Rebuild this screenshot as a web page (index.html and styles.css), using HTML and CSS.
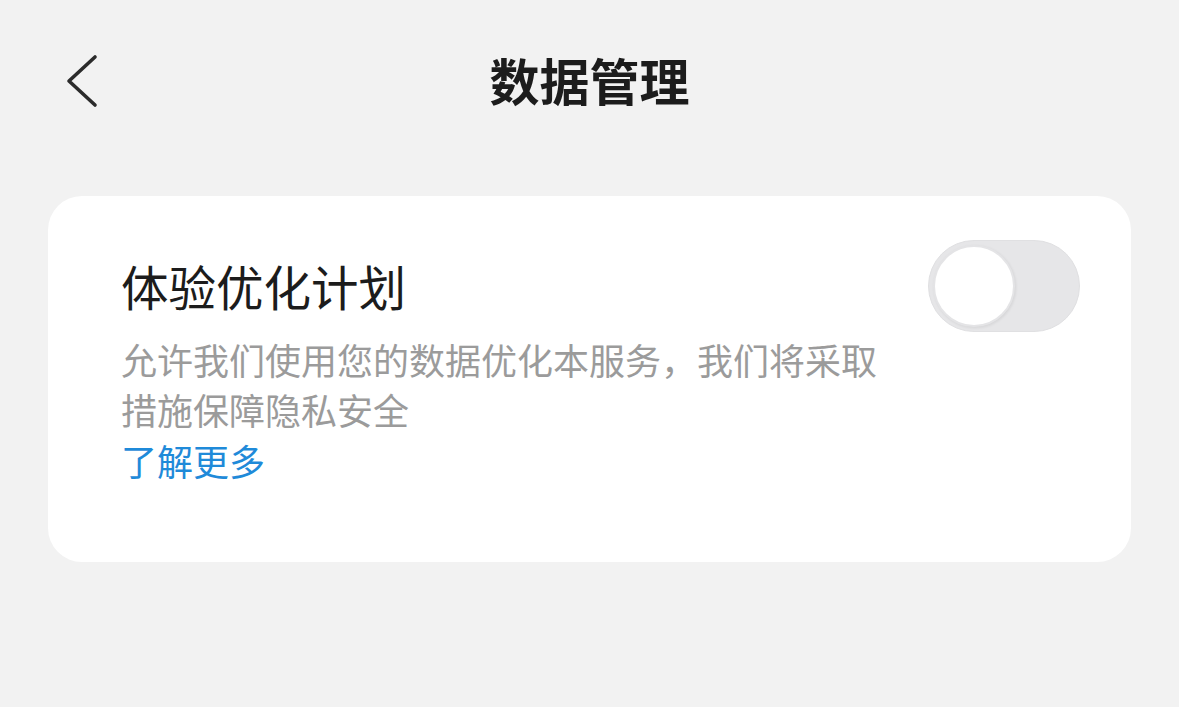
FILE: index.html
```html
<!DOCTYPE html>
<html lang="zh-CN">
<head>
    <meta charset="UTF-8">
    <meta name="viewport" content="width=device-width, initial-scale=1.0">
    <title>数据管理</title>
    <link rel="stylesheet" href="styles.css">
</head>
<body>
    <header class="topbar">
        <a class="back" href="#">
            <svg width="36" height="54" viewBox="0 0 36 54">
                <polyline points="31,3 5,27 31,51" fill="none" stroke="#2b2b2b" stroke-width="3.6" stroke-linecap="round" stroke-linejoin="round"/>
            </svg>
        </a>
        <h1>数据管理</h1>
        <span></span>
    </header>

    <div class="card">
        <div class="card-text">
            <div class="item-title">体验优化计划</div>
            <p class="item-desc">允许我们使用您的数据优化本服务，我们将采取措施保障隐私安全</p>
            <a class="item-link" href="#">了解更多</a>
        </div>
        <div class="switch">
            <div class="knob"></div>
        </div>
    </div>
</body>
</html>
```

FILE: styles.css
```css
body {
    margin: 0;
    padding: 0;
    background: #f2f2f2;
    font-family: "Noto Sans CJK SC", "Noto Sans", sans-serif;
    color: #1a1a1a;
}
.topbar {
    height: 162px;
    display: grid;
    grid-template-columns: 1fr auto 1fr;
    align-items: center;
}
.back {
    display: flex;
    padding-left: 64px;
    align-items: center;
}
.topbar h1 {
    margin: 0 0 4px;
    font-size: 50px;
    font-weight: bold;
    line-height: 60px;
    color: #1c1c1c;
}
.card {
    margin: 34px 48px 0;
    background: #ffffff;
    border-radius: 34px;
    padding: 44px 51px 76px 73px;
    display: flex;
    align-items: flex-start;
    gap: 36px;
}
.card-text {
    flex: 1;
}
.item-title {
    font-size: 47.5px;
    line-height: 92px;
    color: #1c1c1c;
}
.item-desc {
    margin: 2px 0 0;
    font-size: 36px;
    line-height: 50px;
    color: #9b9b9b;
}
.item-link {
    display: block;
    font-size: 36px;
    line-height: 52px;
    color: #1f8ad9;
    text-decoration: none;
}
.switch {
    width: 152px;
    height: 92px;
    border-radius: 46px;
    background: #e6e6e8;
    box-sizing: border-box;
    border: 1px solid #e0e0e2;
    display: flex;
    align-items: center;
    padding-left: 4px;
}
.knob {
    width: 82px;
    height: 82px;
    border-radius: 50%;
    background: #ffffff;
    box-sizing: border-box;
    border: 2px solid #e4e4e6;
    box-shadow: 1px 1px 3px rgba(0, 0, 0, 0.08);
}
```
